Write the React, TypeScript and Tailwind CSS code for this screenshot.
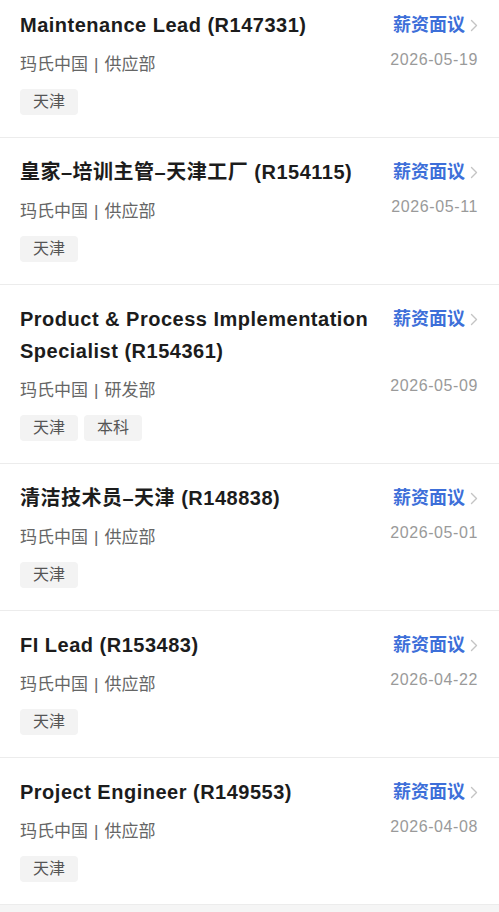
import React from "react";

interface Job {
  id: string;
  title: string;
  company: string;
  dept: string;
  date: string;
  tags: string[];
}

const jobs: Job[] = [
  { id: "1", title: "Maintenance Lead (R147331)", company: "玛氏中国", dept: "供应部", date: "2026-05-19", tags: ["天津"] },
  { id: "2", title: "皇家–培训主管–天津工厂 (R154115)", company: "玛氏中国", dept: "供应部", date: "2026-05-11", tags: ["天津"] },
  { id: "3", title: "Product & Process Implementation Specialist (R154361)", company: "玛氏中国", dept: "研发部", date: "2026-05-09", tags: ["天津", "本科"] },
  { id: "4", title: "清洁技术员–天津 (R148838)", company: "玛氏中国", dept: "供应部", date: "2026-05-01", tags: ["天津"] },
  { id: "5", title: "FI Lead (R153483)", company: "玛氏中国", dept: "供应部", date: "2026-04-22", tags: ["天津"] },
  { id: "6", title: "Project Engineer (R149553)", company: "玛氏中国", dept: "供应部", date: "2026-04-08", tags: ["天津"] },
];

const ChevronRight = () => (
  <svg width="8" height="13" viewBox="0 0 8 13" fill="none" className="ml-[5px]">
    <polyline points="1.5,1.5 6.5,6.5 1.5,11.5" stroke="#c4c4c4" strokeWidth="1.4" strokeLinecap="round" strokeLinejoin="round" />
  </svg>
);

const JobCard: React.FC<{ job: Job }> = ({ job }) => (
  <div className="bg-white pl-5 pr-[21px] pt-[18px] pb-[22px]">
    {/* title + salary */}
    <div className="flex items-start justify-between gap-6">
      <h2 className="flex-1 text-[20px] leading-[32px] font-semibold tracking-[0.5px] text-[#1c1c1c]">{job.title}</h2>
      <div className="flex items-center h-[32px] shrink-0">
        <span className="text-[18px] font-bold text-[#3d6fd9]">薪资面议</span>
        <ChevronRight />
      </div>
    </div>

    {/* company + date */}
    <div className="mt-3 flex items-start justify-between">
      <p className="text-[17px] leading-6 text-[#666]">
        {job.company}<span className="mx-[6px]">|</span>{job.dept}
      </p>
      <span className="text-[16px] leading-[14px] text-[#9a9a9a] tracking-[0.6px]">{job.date}</span>
    </div>

    {/* tags */}
    <div className="mt-3 flex gap-[6px]">
      {job.tags.map((t) => (
        <span key={t} className="h-[26px] px-[13px] rounded bg-[#f3f3f3] text-[16px] leading-[26px] text-[#555]">
          {t}
        </span>
      ))}
    </div>
  </div>
);

const App: React.FC = () => {
  return (
    <div
      className="min-h-screen bg-[#f5f5f5] overflow-hidden"
      style={{ fontFamily: '"Liberation Sans", "Noto Sans CJK SC", sans-serif' }}
    >
      <div className="-mt-[9px] flex flex-col gap-px bg-[#ececec] pb-px">
        {jobs.map((job) => (
          <JobCard key={job.id} job={job} />
        ))}
      </div>
    </div>
  );
};

export default App;
